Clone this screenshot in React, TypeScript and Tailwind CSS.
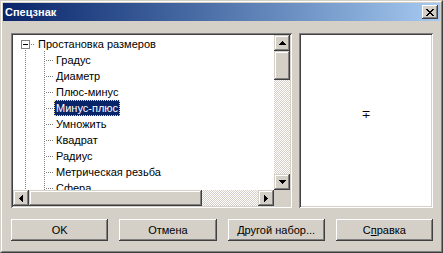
import React from "react";

const FONT = { fontFamily: '"Liberation Sans", Arial, sans-serif' };

const pushBevel =
  "shadow-[inset_-1px_-1px_#404040,inset_1px_1px_#ffffff,inset_-2px_-2px_#808080,inset_2px_2px_#d4d0c8]";
const scrollBevel =
  "shadow-[inset_-1px_-1px_#404040,inset_1px_1px_#d4d0c8,inset_-2px_-2px_#808080,inset_2px_2px_#ffffff]";
const checker =
  "bg-[repeating-conic-gradient(#d4d0c8_0_25%,#ffffff_0_50%)] bg-[length:2px_2px]";

function Arrow({ dir }: { dir: "up" | "down" | "left" | "right" }) {
  const rows = [1, 3, 5, 7];
  const rects: React.ReactNode[] = [];
  if (dir === "up" || dir === "down") {
    rows.forEach((w, i) => {
      const y = dir === "up" ? i : 3 - i;
      rects.push(<rect key={i} x={(7 - w) / 2} y={y} width={w} height={1} />);
    });
    return (
      <svg width="7" height="4" viewBox="0 0 7 4" shapeRendering="crispEdges" fill="#000">
        {rects}
      </svg>
    );
  }
  rows.forEach((w, i) => {
    const x = dir === "left" ? i : 3 - i;
    rects.push(<rect key={i} x={x} y={(7 - w) / 2} width={1} height={w} />);
  });
  return (
    <svg width="4" height="7" viewBox="0 0 4 7" shapeRendering="crispEdges" fill="#000">
      {rects}
    </svg>
  );
}

function ScrollBtn({ dir }: { dir: "up" | "down" | "left" | "right" }) {
  return (
    <div className={`w-[16px] h-[16px] shrink-0 bg-[#d4d0c8] ${scrollBevel} flex items-center justify-center`}>
      <Arrow dir={dir} />
    </div>
  );
}

function CloseX() {
  const pattern = ["XX....XX", ".XX..XX.", "..XXXX..", "...XX...", "..XXXX..", ".XX..XX.", "XX....XX"];
  const rects: React.ReactNode[] = [];
  pattern.forEach((row, y) =>
    row.split("").forEach((c, x) => {
      if (c === "X") rects.push(<rect key={`${x}-${y}`} x={x} y={y} width={1} height={1} />);
    })
  );
  return (
    <svg width="8" height="7" viewBox="0 0 8 7" shapeRendering="crispEdges" fill="#000">
      {rects}
    </svg>
  );
}

function RootLines() {
  return (
    <svg width="41" height="16" viewBox="0 0 41 16" shapeRendering="crispEdges" className="shrink-0">
      <rect x="8.5" y="4.5" width="8" height="8" fill="#fff" stroke="#808080" strokeWidth="1" />
      <rect x="10" y="8" width="5" height="1" fill="#000" />
      {[1, 3].map((o) => (
        <rect key={o} x={17 + o} y="8" width="1" height="1" fill="#808080" />
      ))}
      {[14].map((y) => (
        <rect key={y} x="12" y={y} width="1" height="1" fill="#808080" />
      ))}
      <rect x="31" y="15" width="1" height="1" fill="#808080" />
    </svg>
  );
}

function ChildLines() {
  const dots: React.ReactNode[] = [];
  for (let y = 0; y < 16; y += 2) {
    dots.push(<rect key={`a${y}`} x="12" y={y} width="1" height="1" fill="#808080" />);
    dots.push(<rect key={`b${y}`} x="31" y={y + 1} width="1" height="1" fill="#808080" />);
  }
  for (let x = 33; x <= 40; x += 2) {
    dots.push(<rect key={`h${x}`} x={x} y="8" width="1" height="1" fill="#808080" />);
  }
  return (
    <svg width="41" height="16" viewBox="0 0 41 16" shapeRendering="crispEdges" className="shrink-0">
      {dots}
    </svg>
  );
}

const items = [
  "Градус",
  "Диаметр",
  "Плюс-минус",
  "Минус-плюс",
  "Умножить",
  "Квадрат",
  "Радиус",
  "Метрическая резьба",
  "Сфера",
];

function PushButton({ children }: { children: React.ReactNode }) {
  return (
    <div
      className={`h-[22px] bg-[#d4d0c8] ${pushBevel} flex items-center justify-center text-[11px] text-black`}
    >
      {children}
    </div>
  );
}

export default function App() {
  return (
    <div className="w-[443px] h-[253px] border border-t-[#d4d0c8] border-l-[#d4d0c8] border-r-[#404040] border-b-[#404040]" style={FONT}>
      <div className="h-full border border-t-white border-l-white border-r-[#808080] border-b-[#808080] bg-[#d4d0c8] p-[1px] flex flex-col">
        {/* Title bar */}
        <div className="h-[18px] shrink-0 bg-linear-to-r from-[#0a246a] to-[#a6caf0] flex items-center pl-[2px] pr-[2px]">
          <span className="text-white font-bold text-[11px] leading-none flex-1">Спецзнак</span>
          <div className={`w-[16px] h-[14px] bg-[#d4d0c8] ${pushBevel} flex items-center justify-center`}>
            <CloseX />
          </div>
        </div>

        {/* Body */}
        <div className="flex-1 flex flex-col pt-[12px] pl-[8px] pr-[7px]">
          <div className="flex gap-[7px] h-[175px]">
            {/* Tree panel */}
            <div className="w-[281px] p-[2px] shadow-[inset_1px_1px_#808080,inset_-1px_-1px_#ffffff,inset_2px_2px_#404040,inset_-2px_-2px_#d4d0c8] flex flex-col">
              <div className="flex-1 flex min-h-0">
                <div className="flex-1 bg-white overflow-hidden pt-[1px] text-[11px] text-black">
                  <div className="h-[16px] flex items-center">
                    <RootLines />
                    <span className="ml-[-18px] pl-[2px] pr-[2px] leading-[16px] whitespace-nowrap">
                      Простановка размеров
                    </span>
                  </div>
                  {items.map((it) => {
                    const sel = it === "Минус-плюс";
                    return (
                      <div key={it} className="h-[16px] flex items-center">
                        <ChildLines />
                        <span
                          className={
                            sel
                              ? "h-[16px] px-[1px] leading-[14px] whitespace-nowrap bg-[#0a246a] text-white border border-dotted border-[#f5db95]"
                              : "h-[16px] px-[2px] leading-[16px] whitespace-nowrap"
                          }
                        >
                          {it}
                        </span>
                      </div>
                    );
                  })}
                </div>
                <div className="w-[16px] flex flex-col">
                  <ScrollBtn dir="up" />
                  <div className={`h-[29px] shrink-0 bg-[#d4d0c8] ${scrollBevel}`} />
                  <div className={`flex-1 ${checker}`} />
                  <ScrollBtn dir="down" />
                </div>
              </div>
              <div className="h-[16px] flex">
                <ScrollBtn dir="left" />
                <div className={`w-[173px] shrink-0 bg-[#d4d0c8] ${scrollBevel}`} />
                <div className={`flex-1 ${checker}`} />
                <ScrollBtn dir="right" />
                <div className="w-[16px] bg-[#d4d0c8]" />
              </div>
            </div>

            {/* Preview panel */}
            <div className="flex-1 p-[2px] shadow-[inset_1px_1px_#808080,inset_-1px_-1px_#ffffff,inset_2px_2px_#404040,inset_-2px_-2px_#d4d0c8]">
              <div className="h-full bg-white flex items-center justify-center pb-[10px]">
                <span className="text-[11px] text-black italic" style={{ fontFamily: '"DejaVu Sans", sans-serif' }}>
                  ∓
                </span>
              </div>
            </div>
          </div>

          {/* Buttons */}
          <div className="mt-[11px] grid grid-cols-4 gap-[11px]">
            <PushButton>OK</PushButton>
            <PushButton>Отмена</PushButton>
            <PushButton>
              <span>
                <span className="underline">Д</span>ругой набор...
              </span>
            </PushButton>
            <PushButton>
              <span>
                С<span className="underline">п</span>равка
              </span>
            </PushButton>
          </div>
        </div>
      </div>
    </div>
  );
}
